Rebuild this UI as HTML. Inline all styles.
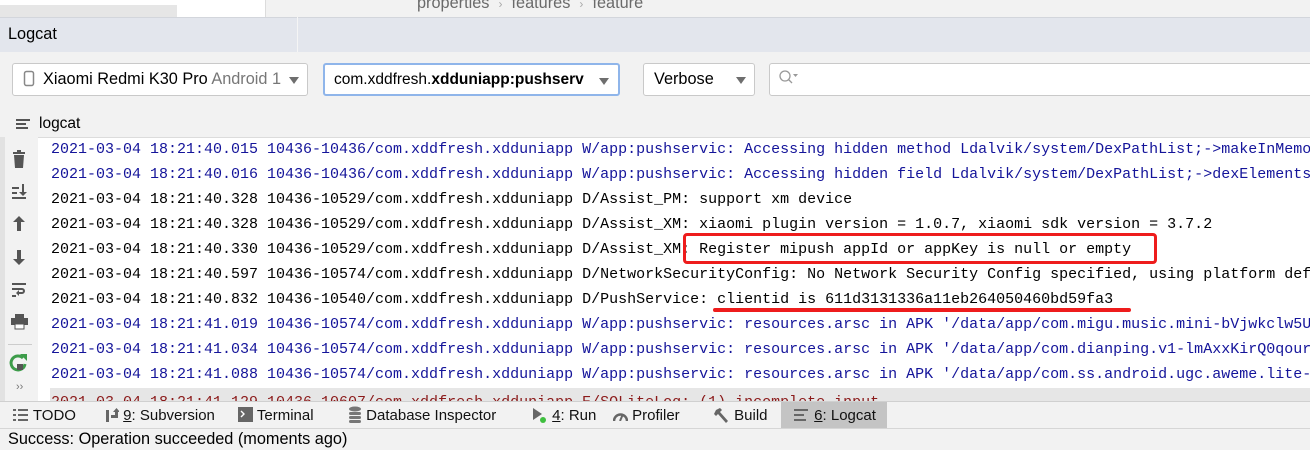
<!DOCTYPE html>
<html><head><meta charset="utf-8">
<style>
*{margin:0;padding:0;box-sizing:border-box}
body{width:1310px;height:450px;overflow:hidden;background:#f2f2f2;font-family:"Liberation Sans",sans-serif;position:relative;font-size:15px;color:#000}
.abs{position:absolute}
.dd{position:absolute;top:63px;height:33px;background:#fff;border:1px solid #c9c9c9;border-radius:3px;font-size:16.3px;line-height:31px;padding-left:10px;white-space:nowrap;overflow:hidden}
.tri{position:absolute;right:8px;top:13px;width:0;height:0;border-left:5px solid transparent;border-right:5px solid transparent;border-top:7px solid #6e6e6e}
#log{position:absolute;left:38px;top:137px;width:1272px;height:265px;background:#fff;overflow:hidden;border-top:1px solid #dcdcdc}
.r{position:absolute;left:13px;height:25px;line-height:25px;font-family:"Liberation Mono",monospace;font-size:15px;white-space:pre;width:1300px}
.w{color:#14149a}.d{color:#000}.e{color:#8b1a1a}
.bt{position:absolute;top:402px;height:26px;line-height:27px;font-size:15px;color:#111;white-space:nowrap}
</style></head><body>
<div class="abs" style="left:0;top:0;width:265px;height:17px;background:#fff"></div>
<div class="abs" style="left:0;top:5px;width:177px;height:12px;background:#e6e6e6"></div>
<div class="abs" style="left:265px;top:0;width:1px;height:17px;background:#dcdcdc"></div>
<div class="abs" style="left:417px;top:-6px;font-size:16.3px;color:#6a6a6a;white-space:nowrap">properties&nbsp;&nbsp;<span style="color:#aaa;font-size:12px">›</span>&nbsp;&nbsp;features&nbsp;&nbsp;<span style="color:#aaa;font-size:12px">›</span>&nbsp;&nbsp;feature</div>
<div class="abs" style="left:0;top:17px;width:1310px;height:35px;background:#e3e6ed;border-top:1px solid #d3d6dc"></div>
<div class="abs" style="left:297px;top:17px;width:1px;height:35px;background:#f5f5f5"></div>
<div class="abs" style="left:8px;top:25px;font-size:16.3px">Logcat</div>
<div class="dd" style="left:12px;width:296px"><svg width="12" height="17" style="vertical-align:-3px;margin-right:8px"><rect x="1.5" y="1.5" width="9" height="14" rx="2" fill="none" stroke="#888" stroke-width="1.5"/></svg>Xiaomi Redmi K30 Pro <span style="color:#777">Android 1</span><div class="tri"></div></div>
<div class="dd" style="left:323px;width:297px;border:2px solid #8fb5ea;line-height:29px;padding-left:9px;font-size:15.5px">com.xddfresh.<b>xdduniapp:pushserv</b><div class="tri" style="right:9px"></div></div>
<div class="dd" style="left:643px;width:112px">Verbose<div class="tri"></div></div>
<div class="dd" style="left:769px;width:545px;padding-left:8px"><svg width="22" height="18" style="vertical-align:-3px"><circle cx="7" cy="7" r="5" fill="none" stroke="#999" stroke-width="1.3"/><line x1="10.5" y1="10.5" x2="14" y2="14" stroke="#999" stroke-width="1.3"/><path d="M15 5h5l-2.5 3z" fill="#999"/></svg></div>
<svg class="abs" style="left:16px;top:118px" width="16" height="14"><rect x="0" y="1" width="14" height="2" fill="#555"/><rect x="0" y="5" width="10" height="2" fill="#555"/><rect x="0" y="9" width="12" height="2" fill="#555"/></svg>
<div class="abs" style="left:39px;top:115px;font-size:15.5px">logcat</div>
<div class="abs" style="left:0;top:137px;width:5px;height:265px;background:#e2e2e2"></div>
<svg class="abs" style="left:8px;top:140px" width="24" height="262">
 <g fill="#555">
 <rect x="5" y="12" width="12" height="2"/><rect x="9" y="10" width="4" height="2"/><path d="M6 15h10l-1 13H7z"/>
 <rect x="4" y="47" width="7" height="2"/><rect x="4" y="52" width="5" height="2"/><rect x="4" y="57" width="14" height="2"/><path d="M14 44v8h-3l4 4 4-4h-3v-8z"/>
 <path d="M11 76l-6 6h4v9h4v-9h4z"/>
 <path d="M11 125l-6-6h4v-9h4v9h4z"/>
 <rect x="4" y="143" width="14" height="2"/><path d="M4 148h10a3 3 0 010 6h-3v2l-3-3 3-3v2h3a1 1 0 000-2H4z"/><rect x="4" y="155" width="4" height="2"/>
 <rect x="7" y="174" width="9" height="4"/><rect x="3" y="178" width="17" height="7"/><rect x="7" y="184" width="9" height="5" fill="#fff" stroke="#555" stroke-width="1"/>
 </g>
 <rect x="-4" y="204" width="32" height="1" fill="#ccc"/>
 <path d="M15 218a7 7 0 10 2 6" fill="none" stroke="#3d9c4a" stroke-width="3"/><path d="M12 214l7 0 0 7z" fill="#3d9c4a"/><rect x="9" y="224" width="6" height="6" fill="#555"/>
 <text x="8" y="250" font-size="11" fill="#777" font-family="Liberation Sans">››</text>
</svg>
<div id="log">
<div class="r w" style="top:-1px">2021-03-04 18:21:40.015 10436-10436/com.xddfresh.xdduniapp W/app:pushservic: Accessing hidden method Ldalvik/system/DexPathList;->makeInMemo</div>
<div class="r w" style="top:24px">2021-03-04 18:21:40.016 10436-10436/com.xddfresh.xdduniapp W/app:pushservic: Accessing hidden field Ldalvik/system/DexPathList;->dexElements</div>
<div class="r d" style="top:49px">2021-03-04 18:21:40.328 10436-10529/com.xddfresh.xdduniapp D/Assist_PM: support xm device</div>
<div class="r d" style="top:74px">2021-03-04 18:21:40.328 10436-10529/com.xddfresh.xdduniapp D/Assist_XM: xiaomi plugin version = 1.0.7, xiaomi sdk version = 3.7.2</div>
<div class="r d" style="top:99px">2021-03-04 18:21:40.330 10436-10529/com.xddfresh.xdduniapp D/Assist_XM: Register mipush appId or appKey is null or empty</div>
<div class="r d" style="top:124px">2021-03-04 18:21:40.597 10436-10574/com.xddfresh.xdduniapp D/NetworkSecurityConfig: No Network Security Config specified, using platform default</div>
<div class="r d" style="top:149px">2021-03-04 18:21:40.832 10436-10540/com.xddfresh.xdduniapp D/PushService: clientid is 611d3131336a11eb264050460bd59fa3</div>
<div class="r w" style="top:174px">2021-03-04 18:21:41.019 10436-10574/com.xddfresh.xdduniapp W/app:pushservic: resources.arsc in APK '/data/app/com.migu.music.mini-bVjwkclw5U</div>
<div class="r w" style="top:199px">2021-03-04 18:21:41.034 10436-10574/com.xddfresh.xdduniapp W/app:pushservic: resources.arsc in APK '/data/app/com.dianping.v1-lmAxxKirQ0qour</div>
<div class="r w" style="top:224px">2021-03-04 18:21:41.088 10436-10574/com.xddfresh.xdduniapp W/app:pushservic: resources.arsc in APK '/data/app/com.ss.android.ugc.aweme.lite-</div>
<div class="abs" style="left:12px;top:250px;width:1260px;height:20px;background:#e6e6e6"></div>
<div class="r e" style="top:252px">2021-03-04 18:21:41.129 10436-10607/com.xddfresh.xdduniapp E/SQLiteLog: (1) incomplete input</div>
</div>
<div class="abs" style="left:683px;top:233px;width:474px;height:31px;border:3px solid #ee1c1c;border-radius:4px"></div>
<div class="abs" style="left:713px;top:308px;width:418px;height:4px;background:#ee1c1c;border-radius:2px"></div>
<div class="abs" style="left:0;top:401px;width:1310px;height:1px;background:#d0d0d0"></div>
<div class="abs" style="left:781px;top:402px;width:106px;height:26px;background:#c4c4c4"></div>
<div class="abs" style="left:0;top:428px;width:1310px;height:1px;background:#d6d6d6"></div>
<div class="bt" style="left:13px"><svg width="16" height="12" style="vertical-align:-1px"><g fill="#666"><rect x="0" y="0" width="3" height="2"/><rect x="5" y="0" width="10" height="2"/><rect x="0" y="5" width="3" height="2"/><rect x="5" y="5" width="10" height="2"/><rect x="0" y="10" width="3" height="2"/><rect x="5" y="10" width="10" height="2"/></g></svg> TODO</div>
<div class="bt" style="left:105px"><svg width="14" height="15" style="vertical-align:-2px"><g fill="#666"><rect x="1" y="3" width="3" height="12"/><path d="M6 8h4V5H8l3.5-4L15 5h-2v6H6z"/></g></svg> <u>9</u>: Subversion</div>
<div class="bt" style="left:238px"><svg width="15" height="15" style="vertical-align:-2px"><rect width="15" height="15" fill="#666"/><path d="M3 4l3 3-3 3" stroke="#fff" fill="none" stroke-width="1.4"/></svg> Terminal</div>
<div class="bt" style="left:348px"><svg width="14" height="17" style="vertical-align:-3px"><g fill="#777"><ellipse cx="7" cy="3" rx="6" ry="2.5"/><rect x="1" y="6" width="12" height="3" rx="1.5"/><rect x="1" y="10" width="12" height="3" rx="1.5"/><rect x="1" y="14" width="12" height="3" rx="1.5"/></g></svg> Database Inspector</div>
<div class="bt" style="left:532px"><svg width="16" height="16" style="vertical-align:-3px"><path d="M1 1l9 6-9 6z" fill="#666"/><circle cx="11" cy="13" r="3" fill="#3fbf3f"/></svg> <u>4</u>: Run</div>
<div class="bt" style="left:613px"><svg width="15" height="12" style="vertical-align:-1px"><path d="M1 12a6.5 6.5 0 0113 0" fill="none" stroke="#666" stroke-width="2.5"/><line x1="7" y1="12" x2="10" y2="5" stroke="#666" stroke-width="2"/></svg> Profiler</div>
<div class="bt" style="left:714px"><svg width="16" height="16" style="vertical-align:-3px"><path d="M2 3l4-2 2 2-2 2 8 9-2 2-8-9-2 2-2-2z" fill="#666"/></svg> Build</div>
<div class="bt" style="left:794px"><svg width="16" height="12" style="vertical-align:-1px"><g fill="#666"><rect x="0" y="0" width="14" height="2"/><rect x="0" y="5" width="10" height="2"/><rect x="0" y="10" width="12" height="2"/></g></svg> <u>6</u>: Logcat</div>
<div class="abs" style="left:8px;top:430px;font-size:16.3px;white-space:nowrap">Success: Operation succeeded (moments ago)</div>
</body></html>
